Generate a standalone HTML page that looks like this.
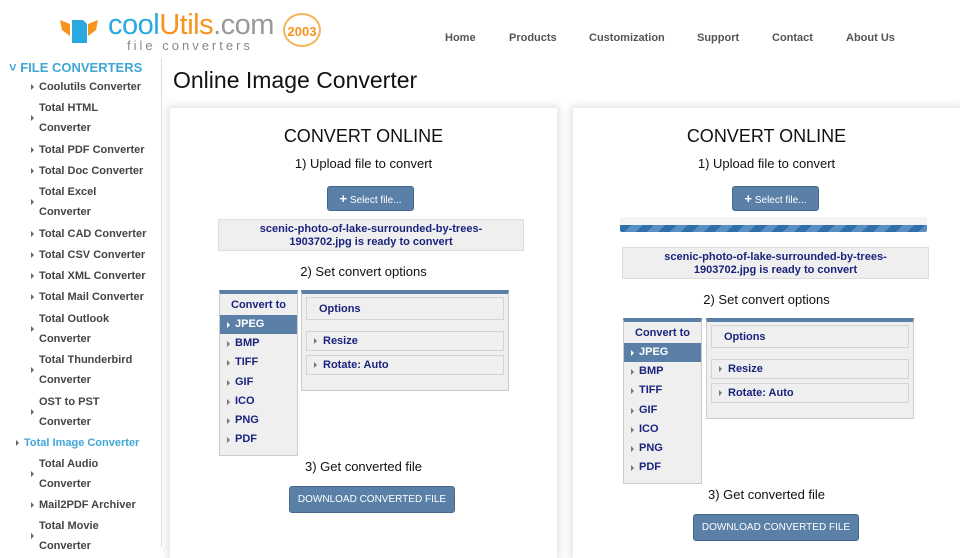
<!DOCTYPE html>
<html><head><meta charset="utf-8"><style>
*{box-sizing:border-box;margin:0;padding:0}
body{width:960px;height:547px;overflow:hidden;background:#fff;font-family:"Liberation Sans",Verdana,sans-serif;position:relative}
.abs{position:absolute}
.nav a{position:absolute;top:32px;font-size:11px;font-weight:bold;color:#555;text-decoration:none}
.side{position:absolute;left:0;top:58px;width:160px}
.side .h{position:absolute;left:9px;top:2px;color:#3fa7d6;font-weight:bold;font-size:13px}
.side .it{position:absolute;left:39px;font-size:11px;font-weight:bold;color:#444;line-height:20px}
.side .it:before{content:"";position:absolute;left:-8px;top:50%;margin-top:-3px;border-left:3px solid #666;border-top:3px solid transparent;border-bottom:3px solid transparent}
.main{position:absolute;left:161px;top:58px;width:799px;height:489px;background:#fff;border-left:1px solid #ddd}
.card{position:absolute;background:#fff;box-shadow:0 0 8px 2px rgba(0,0,0,.13);top:50px;height:450px}
.c{position:absolute;left:0;right:0;text-align:center;color:#111}
.btn{position:absolute;background:#5b80a8;border:1px solid #46688e;border-radius:3px;color:#fff;font-size:10px;text-align:center}
.fbox{position:absolute;background:#efefef;border:1px solid #ddd;color:#1a237e;font-weight:bold;font-size:11px;text-align:center;line-height:13px;padding-top:3px}
.list{position:absolute;width:79px;height:166px;background:#efefef;border:1px solid #ccc;border-top:4px solid #5b80a8}
.list div{height:19.2px;line-height:19px;padding-left:15px;font-size:11px;font-weight:bold;color:#1a237e;position:relative}
.list div:before{content:"";position:absolute;left:7px;top:7px;border-left:3px solid #777;border-top:3px solid transparent;border-bottom:3px solid transparent}
.list .hd{padding:0;text-align:center;height:21px;line-height:23px}
.list .hd:before{display:none}
.list .sel{background:#5b80a8;color:#fff}
.list .sel:before{border-left-color:#fff}
.opt{position:absolute;width:208px;height:101px;background:#efefef;border:1px solid #ccc;border-top:4px solid #5b80a8}
.opt div{position:absolute;left:4px;width:198px;background:#efefef;border:1px solid #d4d4d4;font-size:11px;font-weight:bold;color:#1a237e;padding-left:16px}
.opt .ar:before{content:"";position:absolute;left:7px;top:6px;border-left:3px solid #777;border-top:3px solid transparent;border-bottom:3px solid transparent}
</style></head><body>
<svg class="abs" style="left:58px;top:14px" width="42" height="32" viewBox="0 0 42 32">
<path d="M2 6 L12 10 L12 22 L4 16 Z" fill="#f7941d"/><path d="M40 6 L30 10 L30 22 L38 16 Z" fill="#f7941d"/>
<path d="M14 6 H25 L29 10 V29 H14 Z" fill="#29a9e0"/></svg>
<div class="abs" style="left:108px;top:9px;font-size:29px;letter-spacing:-0.5px;line-height:32px"><span style="color:#29a9e0">cool</span><span style="color:#f7941d">Utils</span><span style="color:#999">.com</span></div>
<div class="abs" style="left:127px;top:38px;font-size:13px;color:#888;letter-spacing:3px">file converters</div>
<div class="abs" style="left:283px;top:13px;width:38px;height:34px;border:2px solid #f7b358;border-radius:50%;color:#f7941d;font-size:13px;font-weight:bold;text-align:center;line-height:34px">2003</div>
<div class="nav"><a style="left:445px">Home</a><a style="left:509px">Products</a><a style="left:589px">Customization</a><a style="left:697px">Support</a><a style="left:772px">Contact</a><a style="left:846px">About Us</a></div>
<div class="side">
<div class="h">˅ FILE CONVERTERS</div>
<div class="it" style="top:19px">Coolutils Converter</div>
<div class="it" style="top:40px">Total HTML<br>Converter</div>
<div class="it" style="top:82px">Total PDF Converter</div>
<div class="it" style="top:103px">Total Doc Converter</div>
<div class="it" style="top:124px">Total Excel<br>Converter</div>
<div class="it" style="top:166px">Total CAD Converter</div>
<div class="it" style="top:187px">Total CSV Converter</div>
<div class="it" style="top:208px">Total XML Converter</div>
<div class="it" style="top:229px">Total Mail Converter</div>
<div class="it" style="top:251px">Total Outlook<br>Converter</div>
<div class="it" style="top:292px">Total Thunderbird<br>Converter</div>
<div class="it" style="top:334px">OST to PST<br>Converter</div>
<div class="it" style="top:375px;left:24px;color:#3fa7d6">Total Image Converter</div>
<div class="it" style="top:396px">Total Audio<br>Converter</div>
<div class="it" style="top:437px">Mail2PDF Archiver</div>
<div class="it" style="top:458px">Total Movie<br>Converter</div>
</div>
<div class="main">
<div class="abs" style="left:11px;top:9px;font-size:23px;color:#111">Online Image Converter</div>
<div class="card" style="left:8px;width:387px">
<div class="c" style="top:18px;font-size:18px">CONVERT ONLINE</div>
<div class="c" style="top:48px;font-size:13px">1) Upload file to convert</div>
<div class="btn" style="left:157px;top:78px;width:87px;height:25px;line-height:24px"><b style="font-size:13px">+</b> Select file...</div>
<div class="fbox" style="left:48px;top:111px;width:306px;height:32px">scenic-photo-of-lake-surrounded-by-trees-<br>1903702.jpg is ready to convert</div>
<div class="c" style="top:156px;font-size:13px">2) Set convert options</div>
<div class="list" style="left:49px;top:182px"><div class="hd">Convert to</div><div class="sel">JPEG</div><div>BMP</div><div>TIFF</div><div>GIF</div><div>ICO</div><div>PNG</div><div>PDF</div></div>
<div class="opt" style="left:131px;top:182px"><div style="top:3px;height:23px;line-height:22px;padding-left:12px">Options</div><div class="ar" style="top:37px;height:20px;line-height:19px">Resize</div><div class="ar" style="top:61px;height:20px;line-height:19px">Rotate: Auto</div></div>
<div class="c" style="top:351px;font-size:13px">3) Get converted file</div>
<div class="btn" style="left:119px;top:378px;width:166px;height:27px;line-height:26px">DOWNLOAD CONVERTED FILE</div>
</div>
<div class="card" style="left:411px;width:387px">
<div class="c" style="top:18px;font-size:18px">CONVERT ONLINE</div>
<div class="c" style="top:48px;font-size:13px">1) Upload file to convert</div>
<div class="btn" style="left:159px;top:78px;width:87px;height:25px;line-height:24px"><b style="font-size:13px">+</b> Select file...</div>
<div class="abs" style="left:47px;top:109px;width:307px;height:15px;background:#f4f4f4;border-radius:2px;overflow:hidden"><div style="position:absolute;left:0;right:0;bottom:0;height:7px;background:repeating-linear-gradient(135deg,#2f6faa 0 8px,#5a8fc4 8px 16px)"></div></div>
<div class="fbox" style="left:49px;top:139px;width:307px;height:32px">scenic-photo-of-lake-surrounded-by-trees-<br>1903702.jpg is ready to convert</div>
<div class="c" style="top:184px;font-size:13px">2) Set convert options</div>
<div class="list" style="left:50px;top:210px"><div class="hd">Convert to</div><div class="sel">JPEG</div><div>BMP</div><div>TIFF</div><div>GIF</div><div>ICO</div><div>PNG</div><div>PDF</div></div>
<div class="opt" style="left:133px;top:210px"><div style="top:3px;height:23px;line-height:22px;padding-left:12px">Options</div><div class="ar" style="top:37px;height:20px;line-height:19px">Resize</div><div class="ar" style="top:61px;height:20px;line-height:19px">Rotate: Auto</div></div>
<div class="c" style="top:379px;font-size:13px">3) Get converted file</div>
<div class="btn" style="left:120px;top:406px;width:166px;height:27px;line-height:26px">DOWNLOAD CONVERTED FILE</div>
</div>
</div>
</body></html>
